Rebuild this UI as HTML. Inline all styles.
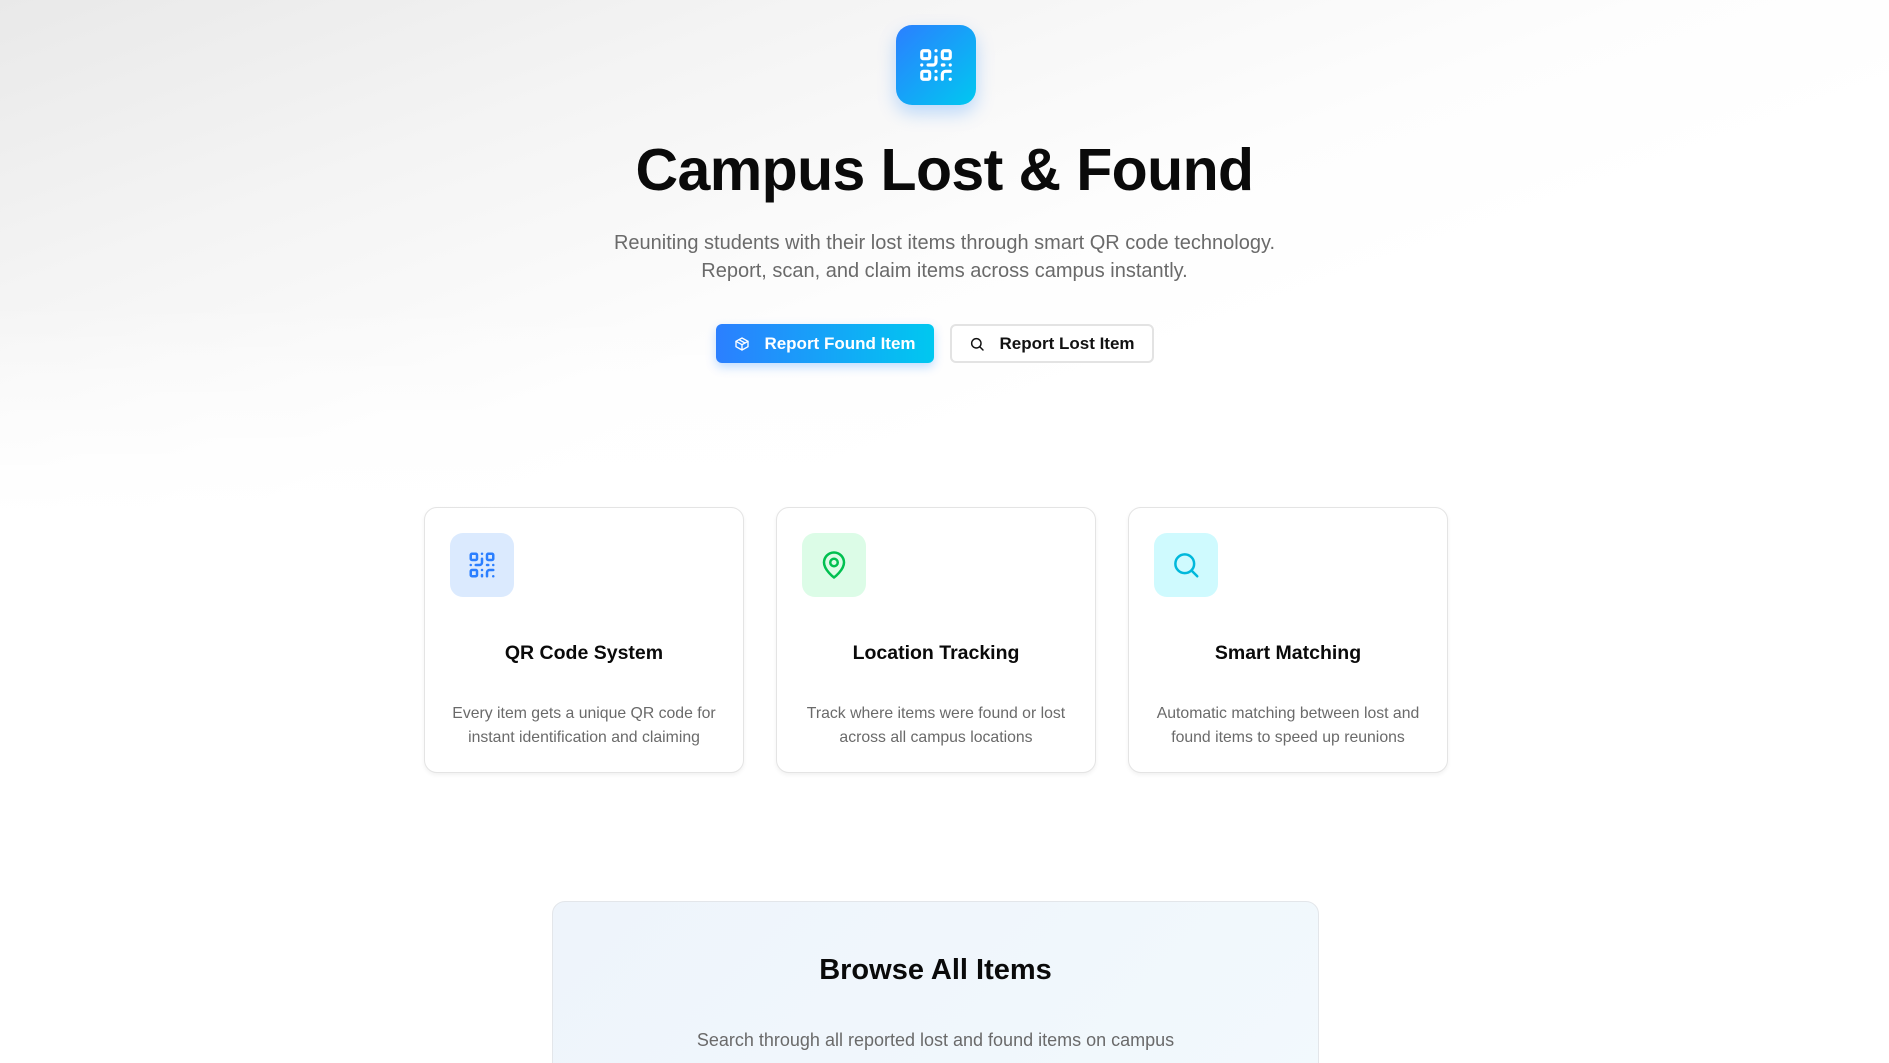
<!DOCTYPE html>
<html><head><meta charset="utf-8"><style>
*{box-sizing:border-box;margin:0;padding:0}
html,body{width:1889px;height:1063px;overflow:hidden}
body{font-family:"Liberation Sans",sans-serif;background:#fff;position:relative;color:#0a0a0a}
.bg{position:absolute;left:0;top:0;width:1889px;height:520px;background:linear-gradient(160deg,#e9e9e9 0%,#f4f4f4 25%,#fdfdfd 50%,#fff 65%)}
.fade{position:absolute;left:0;top:300px;width:1889px;height:220px;background:linear-gradient(180deg,rgba(255,255,255,0),#fff)}
.logo{position:absolute;left:896px;top:25px;width:80px;height:80px;border-radius:16px;background:linear-gradient(135deg,#2b7fff,#00c8f0);box-shadow:0 8px 18px rgba(0,120,255,.25);display:flex;align-items:center;justify-content:center}
h1{position:absolute;left:0;width:1889px;top:136px;text-align:center;font-size:59px;font-weight:bold;letter-spacing:-0.6px}
.sub{position:absolute;left:0;width:1889px;top:229px;text-align:center;font-size:20px;line-height:28px;color:#6a6a6a}
.btn{position:absolute;top:324px;height:39px;border-radius:6px;display:flex;align-items:center;justify-content:center;font-size:17px;font-weight:bold;gap:14px}
.b1{left:716px;width:218px;background:linear-gradient(90deg,#2b7fff,#00c8f0);color:#fff;box-shadow:0 4px 10px rgba(0,120,255,.25)}
.b2{left:950px;width:204px;background:#fff;border:2px solid #e3e3e3;color:#111}
.card{position:absolute;top:507px;width:320px;height:266px;border:1.5px solid #e4e4e4;border-radius:13px;background:#fff;box-shadow:0 2px 4px rgba(0,0,0,.06)}
.ic{position:absolute;left:25px;top:25px;width:64px;height:64px;border-radius:13px;display:flex;align-items:center;justify-content:center}
.ct{position:absolute;top:134px;left:0;width:100%;text-align:center;font-size:19.5px;font-weight:bold}
.cd{position:absolute;top:194px;left:0;width:100%;text-align:center;font-size:15.8px;line-height:24px;color:#6a6a6a}
.browse{position:absolute;left:552px;top:901px;width:767px;height:200px;border:1.5px solid #e3e6ea;border-radius:13px;background:linear-gradient(135deg,#eef4fb,#f2f9fd)}
.browse h2{position:absolute;top:52px;width:100%;text-align:center;font-size:29px;font-weight:bold}
.browse p{position:absolute;top:128px;width:100%;text-align:center;font-size:18px;color:#6a6a6a}
</style></head><body>
<div class="bg"></div><div class="fade"></div>
<div class="logo"><svg width="38" height="38" viewBox="0 0 24 24" fill="none" stroke="#fff" stroke-width="2" stroke-linecap="round" stroke-linejoin="round"><rect x="3" y="3" width="5" height="5" rx="1"/><rect x="16" y="3" width="5" height="5" rx="1"/><rect x="3" y="16" width="5" height="5" rx="1"/><path d="M21 16h-3a2 2 0 0 0-2 2v3"/><path d="M21 21v.01"/><path d="M12 7v3a2 2 0 0 1-2 2H7"/><path d="M3 12h.01"/><path d="M12 3h.01"/><path d="M12 16v.01"/><path d="M16 12h1"/><path d="M21 12v.01"/><path d="M12 21v-1"/></svg></div>
<h1>Campus Lost &amp; Found</h1>
<div class="sub">Reuniting students with their lost items through smart QR code technology.<br>Report, scan, and claim items across campus instantly.</div>
<div class="btn b1"><svg width="16" height="16" viewBox="0 0 24 24" fill="none" stroke="#fff" stroke-width="2" stroke-linecap="round" stroke-linejoin="round"><path d="M21 8l-9-5-9 5v8l9 5 9-5z"/><path d="M3 8l9 5 9-5"/><path d="M12 13v8"/><path d="M7.5 5.5l9 5"/></svg>Report Found Item</div>
<div class="btn b2"><svg width="16" height="16" viewBox="0 0 24 24" fill="none" stroke="#111" stroke-width="2.2" stroke-linecap="round"><circle cx="11" cy="11" r="7"/><path d="M21 21l-4.3-4.3"/></svg>Report Lost Item</div>

<div class="card" style="left:424px"><div class="ic" style="background:#dbeafe"><svg width="30" height="30" viewBox="0 0 24 24" fill="none" stroke="#2b7fff" stroke-width="2" stroke-linecap="round" stroke-linejoin="round"><rect x="3" y="3" width="5" height="5" rx="1"/><rect x="16" y="3" width="5" height="5" rx="1"/><rect x="3" y="16" width="5" height="5" rx="1"/><path d="M21 16h-3a2 2 0 0 0-2 2v3"/><path d="M21 21v.01"/><path d="M12 7v3a2 2 0 0 1-2 2H7"/><path d="M3 12h.01"/><path d="M12 3h.01"/><path d="M12 16v.01"/><path d="M16 12h1"/><path d="M21 12v.01"/><path d="M12 21v-1"/></svg></div><div class="ct">QR Code System</div><div class="cd">Every item gets a unique QR code for<br>instant identification and claiming</div></div>
<div class="card" style="left:776px"><div class="ic" style="background:#dcfce7"><svg width="30" height="30" viewBox="0 0 24 24" fill="none" stroke="#00c050" stroke-width="2" stroke-linecap="round" stroke-linejoin="round"><path d="M20 10c0 6-8 12-8 12s-8-6-8-12a8 8 0 0 1 16 0z"/><circle cx="12" cy="10" r="3"/></svg></div><div class="ct">Location Tracking</div><div class="cd">Track where items were found or lost<br>across all campus locations</div></div>
<div class="card" style="left:1128px"><div class="ic" style="background:#cffafe"><svg width="30" height="30" viewBox="0 0 24 24" fill="none" stroke="#00b8db" stroke-width="2" stroke-linecap="round"><circle cx="11" cy="11" r="7.5"/><path d="M21 21l-4.3-4.3"/></svg></div><div class="ct">Smart Matching</div><div class="cd">Automatic matching between lost and<br>found items to speed up reunions</div></div>

<div class="browse"><h2>Browse All Items</h2><p>Search through all reported lost and found items on campus</p></div>
</body></html>
